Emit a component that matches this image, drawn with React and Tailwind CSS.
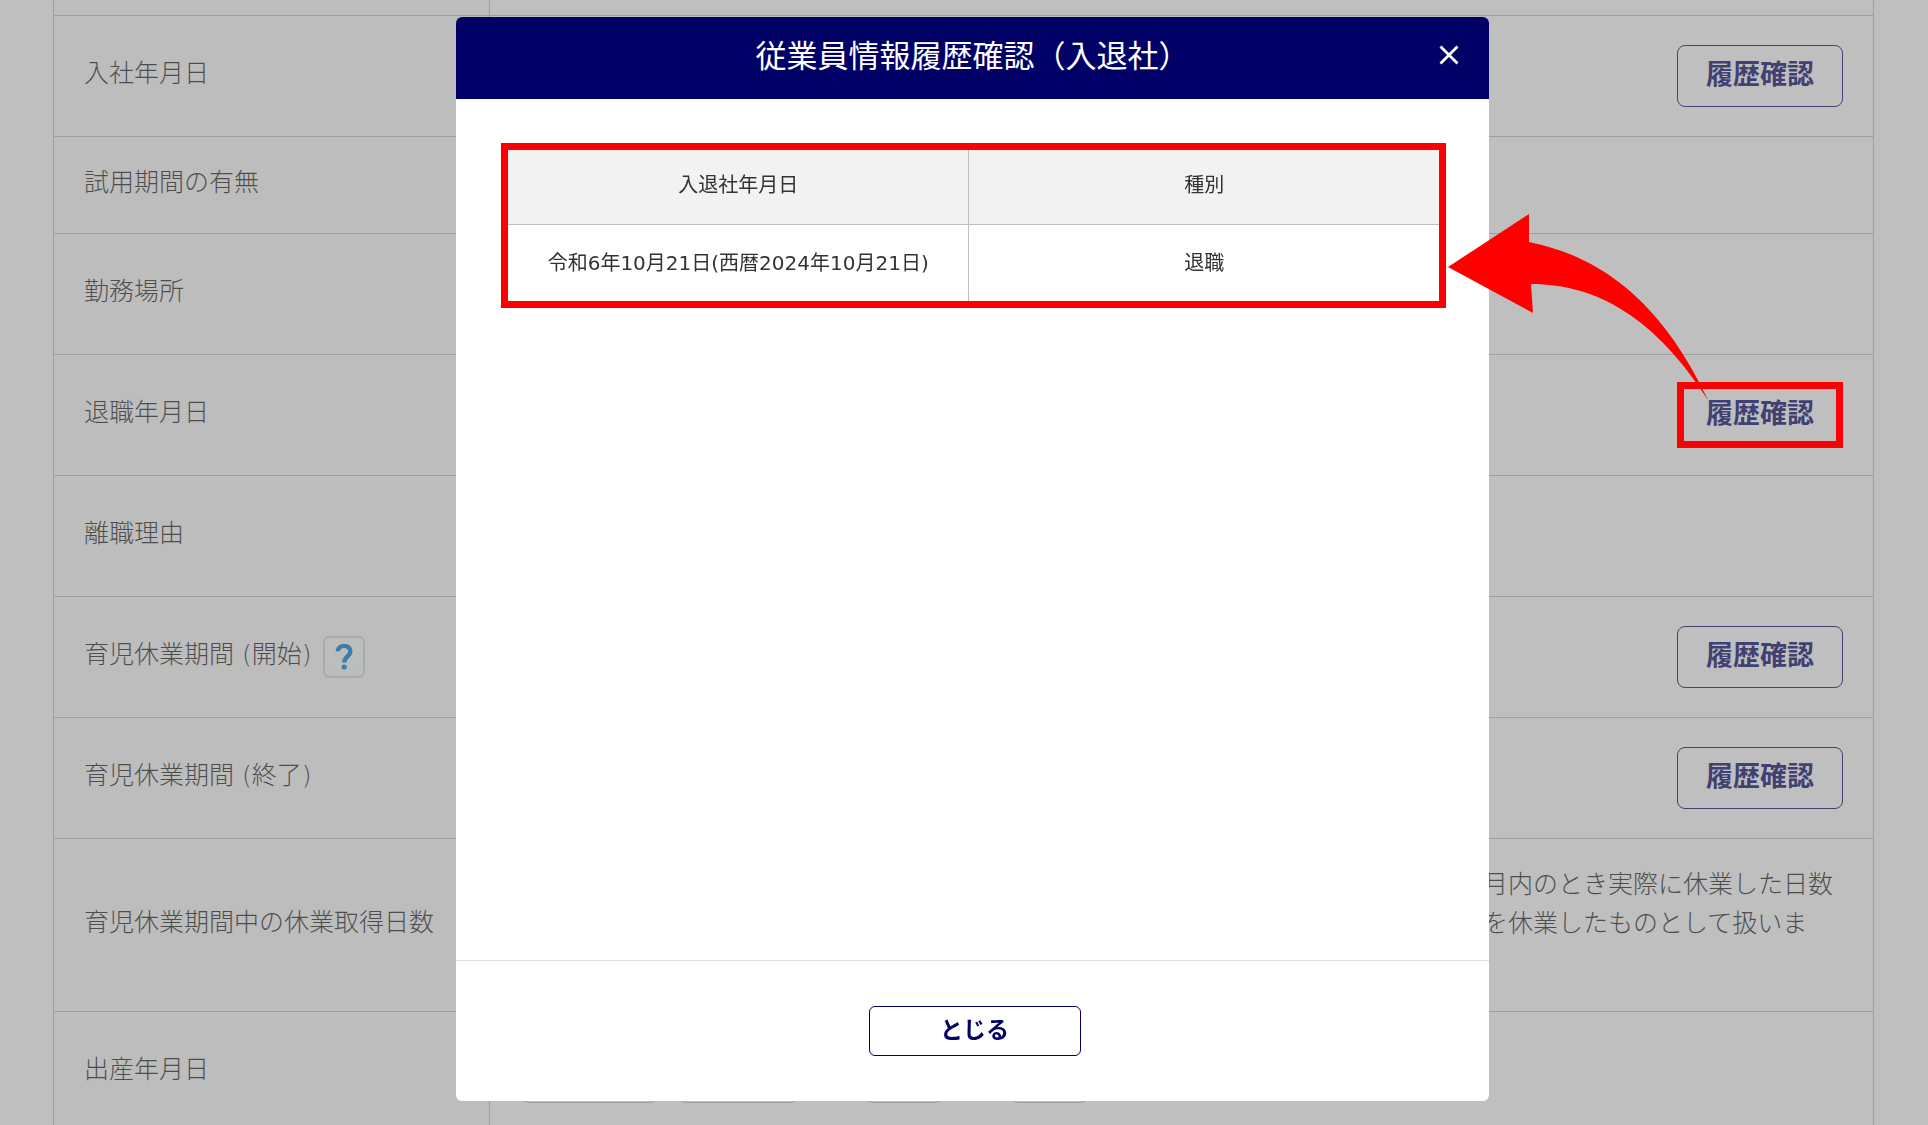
import React from "react";

const cellBorder = "border-t border-[#bfbfbf]";

const rows = [
  { label: "入社年月日", history: true },
  { label: "試用期間の有無", short: true },
  { label: "勤務場所" },
  { label: "退職年月日", history: true, marked: true },
  { label: "離職理由" },
  { label: "育児休業期間 (開始)", history: true, help: true },
  { label: "育児休業期間 (終了)", history: true },
  { label: "育児休業期間中の休業取得日数", note: true },
  { label: "出産年月日", date: true },
];

const HelpButton = () => (
  <button
    type="button"
    aria-label="ヘルプ"
    className="h-[42px] w-[42px] shrink-0 rounded-md border-2 border-[#d4d4d4] bg-linear-to-b from-[#fafafa] to-[#f4faff]"
  >
    <svg viewBox="2 2 38 38" className="h-full w-full" fill="none">
      <path
        d="M14.8 15.2C14.8 8 27.4 8 27.4 15.6C27.4 20.2 21.2 20.6 21.2 26.4"
        stroke="#0078d4"
        strokeWidth="4.4"
      />
      <circle cx="21.2" cy="31" r="2.6" fill="#0078d4" />
    </svg>
  </button>
);

const Callout = () => (
  <>
    <span className="pointer-events-none absolute inset-x-0 -inset-y-0.5 z-30 border-[7px] border-[#ff0000]" />
    <svg
      viewBox="0 0 260 186"
      className="pointer-events-none absolute -top-[170px] -left-[229px] z-30 h-[186px] w-[260px] max-w-none"
    >
      <path
        d="M0 53L81 0V28C150 42 212 84 260 186C208 105 150 70 83 70L85 99Z"
        fill="#ff0000"
      />
    </svg>
  </>
);

const HistoryButton = ({ marked }) => (
  <div className="relative ml-auto h-[62px] w-[166px]">
    <button
      type="button"
      className="h-full w-full rounded-lg border border-[#000066] pb-0.5 text-[27px] font-bold text-[#000066]"
    >
      履歴確認
    </button>
    {marked && <Callout />}
  </div>
);

const Note = () => (
  <p className="ml-auto w-[610px] pr-[10px] pb-1 leading-[39px] whitespace-nowrap">
    開始日と終了日が同じ月内のとき実際に休業した日数
    <br />
    未入力の場合は全日数を休業したものとして扱いま
    <br />
    す。
  </p>
);

const DateInputs = () => (
  <div className="flex items-center">
    <select
      aria-label="元号"
      className="h-[62px] w-[138px] rounded-lg border border-[#bfbfbf] px-3"
    >
      <option>令和</option>
    </select>
    <input
      aria-label="年"
      className="ml-5 h-[62px] w-[120px] rounded-lg border border-[#bfbfbf] px-3"
    />
    <span className="w-[67px] text-center">年</span>
    <input
      aria-label="月"
      className="h-[62px] w-[78px] rounded-lg border border-[#bfbfbf] px-3"
    />
    <span className="w-[68px] text-center">月</span>
    <input
      aria-label="日"
      className="h-[62px] w-[78px] rounded-lg border border-[#bfbfbf] px-3"
    />
    <span className="w-[67px] text-center">日</span>
  </div>
);

const EmployeeTable = () => (
  <table className="w-full table-fixed border-separate border-spacing-0 border-x border-[#bfbfbf] text-[25px] font-light text-[#1a1a1a]">
    <colgroup>
      <col className="w-[435px]" />
      <col />
    </colgroup>
    <tbody>
      <tr>
        <td className="h-[15px] bg-[#fbfbfb]" />
        <td className="h-[15px] border-l border-[#bfbfbf]" />
      </tr>
      {rows.map((row) => (
        <tr
          key={row.label}
          className={row.note ? "h-[173px]" : row.short ? "h-[97px]" : "h-[121px]"}
        >
          <th
            scope="row"
            className={`${cellBorder} bg-[#fbfbfb] pl-[30px] text-left font-light whitespace-nowrap`}
          >
            <div className="flex items-center gap-3">
              <span className="pb-1">{row.label}</span>
              {row.help && <HelpButton />}
            </div>
          </th>
          <td className={`${cellBorder} border-l px-[30px]`}>
            {row.history && <HistoryButton marked={row.marked} />}
            {row.note && <Note />}
            {row.date && <DateInputs />}
          </td>
        </tr>
      ))}
    </tbody>
  </table>
);

const HistoryModal = () => (
  <div className="fixed inset-0 z-20 flex justify-center bg-[#808080]/50 pt-[17px] pb-6 pl-[17px]">
    <div
      role="dialog"
      aria-labelledby="modal-title"
      className="flex w-full max-w-[1033px] flex-col overflow-hidden rounded-md bg-white text-[#333333]"
    >
      <header className="relative flex h-[82px] shrink-0 items-center justify-center bg-[#000066] pb-1 text-white">
        <h1 id="modal-title" className="text-[31px]">
          従業員情報履歴確認（入退社）
        </h1>
        <button
          type="button"
          aria-label="閉じる"
          className="absolute top-7 right-[30px] h-5 w-5"
        >
          <svg viewBox="0 0 20 20" stroke="white" strokeWidth="2.8">
            <path d="M1.5 1.5L18.5 18.5M18.5 1.5L1.5 18.5" />
          </svg>
        </button>
      </header>

      <div className="flex-1 py-11 pr-[43px] pl-[45px]">
        <div className="border-[7px] border-[#ff0000]">
          <table className="w-full table-fixed border-collapse text-center text-xl">
            <thead>
              <tr className="h-[74px] border-b border-[#bfbfbf] bg-[#f2f2f2]">
                <th className="w-[49.5%] border-r border-[#bfbfbf] pb-1 font-normal">
                  入退社年月日
                </th>
                <th className="pb-1 font-normal">種別</th>
              </tr>
            </thead>
            <tbody>
              <tr className="h-[77px]">
                <td className="border-r border-[#bfbfbf]">
                  令和6年10月21日(西暦2024年10月21日)
                </td>
                <td>退職</td>
              </tr>
            </tbody>
          </table>
        </div>
      </div>

      <footer className="flex shrink-0 justify-center border-t border-[#dddddd] py-[45px] pl-1">
        <button
          type="button"
          className="h-[50px] w-[212px] rounded-md border border-[#000066] pb-0.5 text-[23px] font-bold text-[#000066]"
        >
          とじる
        </button>
      </footer>
    </div>
  </div>
);

const App = () => {
  return (
    <div
      lang="ja"
      className="h-screen overflow-hidden bg-white pr-[54px] pl-[53px] font-['DejaVu_Sans','Noto_Sans_CJK_JP',sans-serif]"
    >
      <EmployeeTable />
      <HistoryModal />
    </div>
  );
};

export default App;
